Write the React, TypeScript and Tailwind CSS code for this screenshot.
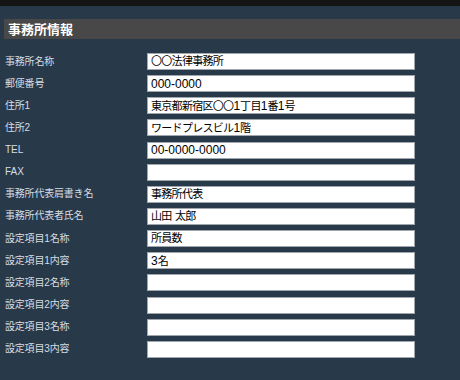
import React from "react";

const rows: [string, string][] = [
  ["事務所名称", "〇〇法律事務所"],
  ["郵便番号", "000-0000"],
  ["住所1", "東京都新宿区〇〇1丁目1番1号"],
  ["住所2", "ワードプレスビル1階"],
  ["TEL", "00-0000-0000"],
  ["FAX", ""],
  ["事務所代表肩書き名", "事務所代表"],
  ["事務所代表者氏名", "山田 太郎"],
  ["設定項目1名称", "所員数"],
  ["設定項目1内容", "3名"],
  ["設定項目2名称", ""],
  ["設定項目2内容", ""],
  ["設定項目3名称", ""],
  ["設定項目3内容", ""],
];

function runs(s: string) {
  const out: { t: string; cjk: boolean }[] = [];
  for (const ch of s) {
    const cjk = /[^\x00-\x7f]/.test(ch);
    const last = out[out.length - 1];
    if (last && last.cjk === cjk) last.t += ch;
    else out.push({ t: ch, cjk });
  }
  return out;
}

function Mixed({ s, kind }: { s: string; kind: "label" | "value" }) {
  return (
    <span className="whitespace-pre leading-none">
      {runs(s).map((r, i) =>
        r.cjk ? (
          <span
            key={i}
            className={
              kind === "value"
                ? "text-[11px] tracking-[-0.7px]"
                : "text-[10px] tracking-[-0.2px]"
            }
          >
            {r.t}
          </span>
        ) : (
          <span
            key={i}
            className={kind === "value" ? "text-[12px]" : "text-[10px]"}
          >
            {r.t}
          </span>
        )
      )}
    </span>
  );
}

export default function App() {
  return (
    <div
      className="w-[460px] h-[380px] bg-[#28394a] overflow-hidden"
      style={{ fontFamily: '"Liberation Sans", "Noto Sans CJK JP", sans-serif' }}
    >
      <div className="h-[6px] bg-[#141414]" />
      <div className="mt-[13px] ml-[4px] h-[20px] bg-[#484848] flex items-center pl-[4px]">
        <span className="text-[13px] font-bold text-white leading-none">事務所情報</span>
      </div>
      <div className="mt-[14px] grid grid-cols-[147px_268px] gap-y-[5.15px]">
        {rows.map(([label, value]) => (
          <React.Fragment key={label}>
            <div className="h-[17px] flex items-center pl-[5px] text-[10px] text-[#d8dde2] leading-none whitespace-nowrap">
              <Mixed s={label} kind="label" />
            </div>
            <div className="h-[17px] bg-white border border-[#a0a6ad] flex items-center pl-[3px] text-[11px] text-black leading-none whitespace-nowrap overflow-hidden">
              <Mixed s={value} kind="value" />
            </div>
          </React.Fragment>
        ))}
      </div>
    </div>
  );
}
